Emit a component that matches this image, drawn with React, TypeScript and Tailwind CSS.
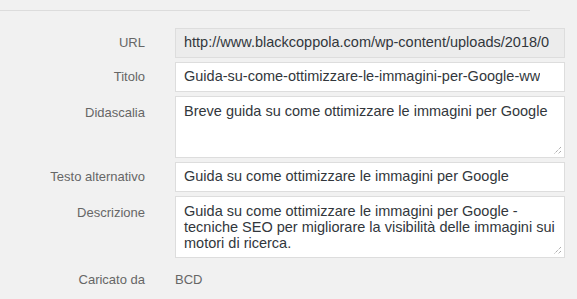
function Label({ children, top = false }: { children: React.ReactNode; top?: boolean }) {
    return (
        <div className={`w-[145px] shrink-0 text-right text-[13px] text-[#666] ${top ? "pt-[7px]" : "self-center"}`}>
            {children}
        </div>
    )
}

function Field({ value, disabled = false }: { value: string; disabled?: boolean }) {
    return (
        <div
            className={`flex h-[30px] w-[390px] items-center border border-[#dddddd] px-[8px] text-[14.5px] text-[#32373c] ${
                disabled ? "bg-[#ececec]" : "bg-white"
            }`}
        >
            <div className="overflow-hidden whitespace-nowrap">{value}</div>
        </div>
    )
}

function Grip() {
    return (
        <svg className="absolute bottom-[2px] right-[2px]" width="9" height="9" viewBox="0 0 9 9">
            <path d="M8 1 L1 8 M8 5 L5 8" stroke="#888" strokeWidth="1" strokeDasharray="1 1" />
        </svg>
    )
}

function Area({ lines }: { lines: string[] }) {
    return (
        <div className="relative h-[62px] w-[390px] border border-[#dddddd] bg-white px-[8px] pt-[6px] text-[14.5px] leading-[16px] text-[#32373c]">
            {lines.map((l) => (
                <div key={l} className="whitespace-nowrap">
                    {l}
                </div>
            ))}
            <Grip />
        </div>
    )
}

export default function App() {
    return (
        <div className="relative h-[299px] w-[577px] overflow-hidden bg-[#f1f1f1] font-['Liberation_Sans',Arial,sans-serif]">
            <div className="h-[11px] w-[530px] border-b border-[#dcdcdc]" />
            <div className="grid gap-[4px] pt-[17px]">
                <div className="flex gap-[30px]">
                    <Label>URL</Label>
                    <Field disabled value="http://www.blackcoppola.com/wp-content/uploads/2018/0" />
                </div>
                <div className="flex gap-[30px]">
                    <Label>Titolo</Label>
                    <Field value="Guida-su-come-ottimizzare-le-immagini-per-Google-ww" />
                </div>
                <div className="flex gap-[30px]">
                    <Label top>Didascalia</Label>
                    <Area lines={["Breve guida su come ottimizzare le immagini per Google"]} />
                </div>
                <div className="flex gap-[30px]">
                    <Label>Testo alternativo</Label>
                    <Field value="Guida su come ottimizzare le immagini per Google" />
                </div>
                <div className="flex gap-[30px]">
                    <Label top>Descrizione</Label>
                    <Area
                        lines={[
                            "Guida su come ottimizzare le immagini per Google -",
                            "tecniche SEO per migliorare la visibilità delle immagini sui",
                            "motori di ricerca.",
                        ]}
                    />
                </div>
                <div className="flex gap-[30px] pt-[8px]">
                    <Label>Caricato da</Label>
                    <div className="text-[13px] text-[#666]">BCD</div>
                </div>
            </div>
        </div>
    )
}
